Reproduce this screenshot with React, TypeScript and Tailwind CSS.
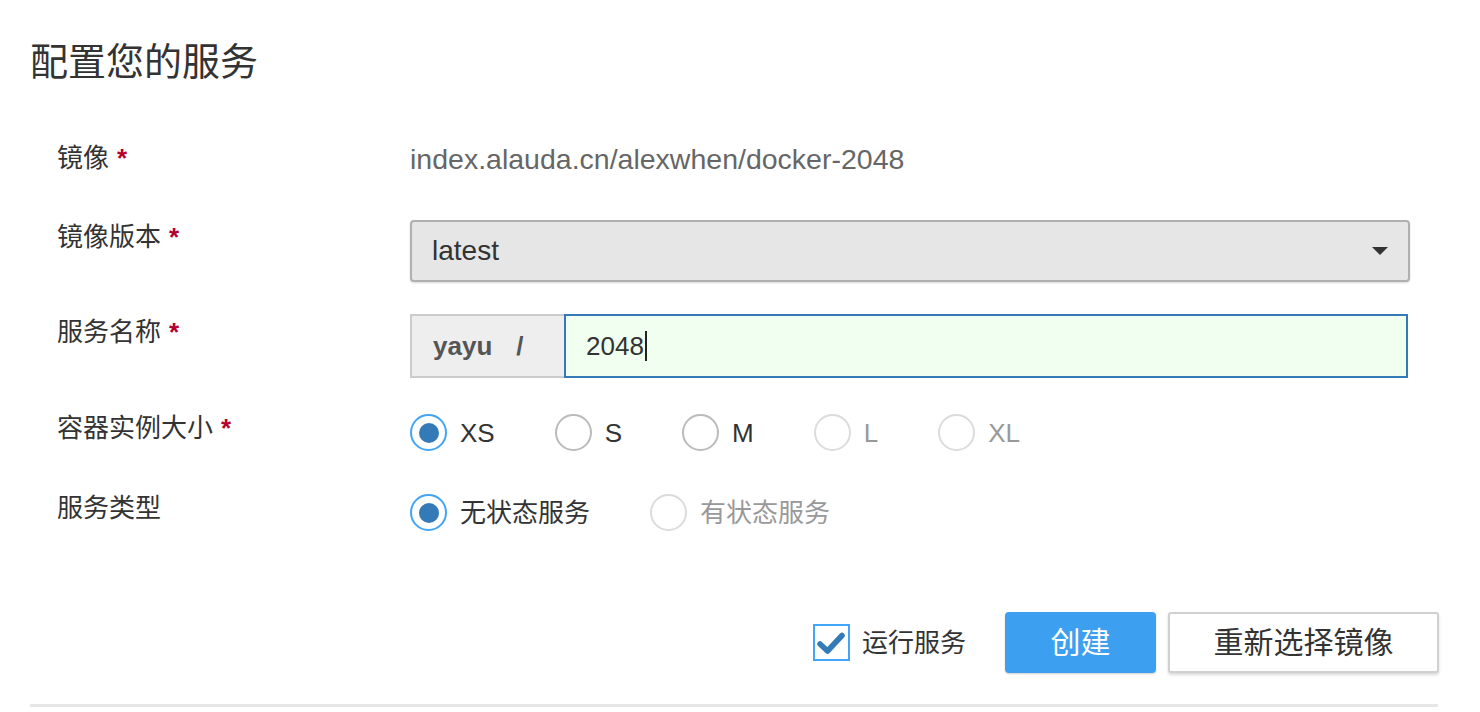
import React from "react";

const font = "font-['Liberation_Sans','Noto_Sans_CJK_SC',sans-serif]";

function Label({ text, required }: { text: string; required?: boolean }) {
  return (
    <div className="w-[353px] shrink-0 text-[26px] leading-[36px] text-[#333]">
      {text}
      {required && <span className="ml-[8px] font-bold text-[#b5002d]">*</span>}
    </div>
  );
}

function Radio({
  label,
  checked = false,
  disabled = false,
}: {
  label: string;
  checked?: boolean;
  disabled?: boolean;
}) {
  const ring = checked
    ? "border-[#42a5f5]"
    : disabled
    ? "border-[#dcdcdc]"
    : "border-[#bbb]";
  return (
    <label className="flex items-center gap-[13px]">
      <span
        className={`flex h-[37px] w-[37px] items-center justify-center rounded-full border-2 bg-white ${ring}`}
      >
        {checked && <span className="h-[20px] w-[20px] rounded-full bg-[#337ab7]" />}
      </span>
      <span className={`text-[26px] leading-[36px] ${disabled ? "text-[#999]" : "text-[#333]"}`}>
        {label}
      </span>
    </label>
  );
}

export default function App() {
  return (
    <div className={`min-h-[712px] w-[1480px] bg-white ${font}`}>
      <div className="w-[1468px] px-[30px] pt-[39px]">
        {/* 标题 */}
        <h1 className="text-[38px] leading-[46px] font-normal text-[#333]">配置您的服务</h1>

        <div className="pl-[27px]">
          {/* 镜像 */}
          <div className="mt-[55px] flex items-start">
            <Label text="镜像" required />
            <div className="mt-[1px] text-[28.5px] leading-[36px] text-[#666]">
              index.alauda.cn/alexwhen/docker-2048
            </div>
          </div>

          {/* 镜像版本 */}
          <div className="mt-[42px] flex items-start">
            <Label text="镜像版本" required />
            <div className="mt-[1px] flex h-[62px] w-[1000px] items-center justify-between rounded-[4px] border-2 border-[#b0b0b0] bg-[#e6e6e6] pl-[20px] pr-[20px] shadow-[0_1px_2px_rgba(0,0,0,0.15)]">
              <span className="text-[28px] text-[#333]">latest</span>
              <svg width="16" height="8" viewBox="0 0 16 8">
                <path d="M0 0 L16 0 L8 8 Z" fill="#333" />
              </svg>
            </div>
          </div>

          {/* 服务名称 */}
          <div className="mt-[32px] flex items-start">
            <Label text="服务名称" required />
            <div className="flex h-[64px] w-[998px]">
              <div className="flex w-[154px] shrink-0 items-center border-2 border-r-0 border-[#ccc] bg-[#eee] pl-[21px] text-[26px] font-bold text-[#555]">
                <span>yayu</span>
                <span className="ml-[24px]">/</span>
              </div>
              <div className="flex flex-1 items-center border-2 border-[#337ab7] bg-[#f0fff0] pl-[20px] text-[26px] text-[#333]">
                <span>2048</span>
                <span className="ml-[1px] h-[30px] w-[2px] bg-[#222]" />
              </div>
            </div>
          </div>

          {/* 容器实例大小 */}
          <div className="mt-[32px] flex items-start">
            <Label text="容器实例大小" required />
            <div className="mt-[4px] flex gap-[60px]">
              <Radio label="XS" checked />
              <Radio label="S" />
              <Radio label="M" />
              <Radio label="L" disabled />
              <Radio label="XL" disabled />
            </div>
          </div>

          {/* 服务类型 */}
          <div className="mt-[39px] flex items-start">
            <Label text="服务类型" />
            <div className="mt-[4px] flex gap-[60px]">
              <Radio label="无状态服务" checked />
              <Radio label="有状态服务" disabled />
            </div>
          </div>
        </div>

        {/* 底部操作 */}
        <div className="mt-[81px] flex items-center justify-end">
          <label className="flex items-center gap-[12px]">
            <span className="flex h-[37px] w-[37px] items-center justify-center border-2 border-[#42a5f5] bg-white">
              <svg width="32" height="32" viewBox="0 0 32 32">
                <path
                  d="M5 17 L12.5 24 L27 8.5"
                  fill="none"
                  stroke="#337ab7"
                  strokeWidth="5.5"
                  strokeLinecap="round"
                  strokeLinejoin="round"
                />
              </svg>
            </span>
            <span className="text-[26px] leading-[36px] text-[#333]">运行服务</span>
          </label>
          <button className="ml-[39px] h-[61px] w-[151px] rounded-[4px] bg-[#3d9ff0] text-[30px] text-white shadow-[0_1px_2px_rgba(0,0,0,0.2)]">
            创建
          </button>
          <button className="ml-[12px] -mr-[1px] h-[61px] w-[271px] rounded-[3px] border-2 border-[#d0d0d0] bg-white text-[30px] text-[#333] shadow-[0_2px_3px_rgba(0,0,0,0.15)]">
            重新选择镜像
          </button>
        </div>

        <div className="mt-[31px] h-[3px] w-full bg-[#e6e6e6]" />
      </div>
    </div>
  );
}
